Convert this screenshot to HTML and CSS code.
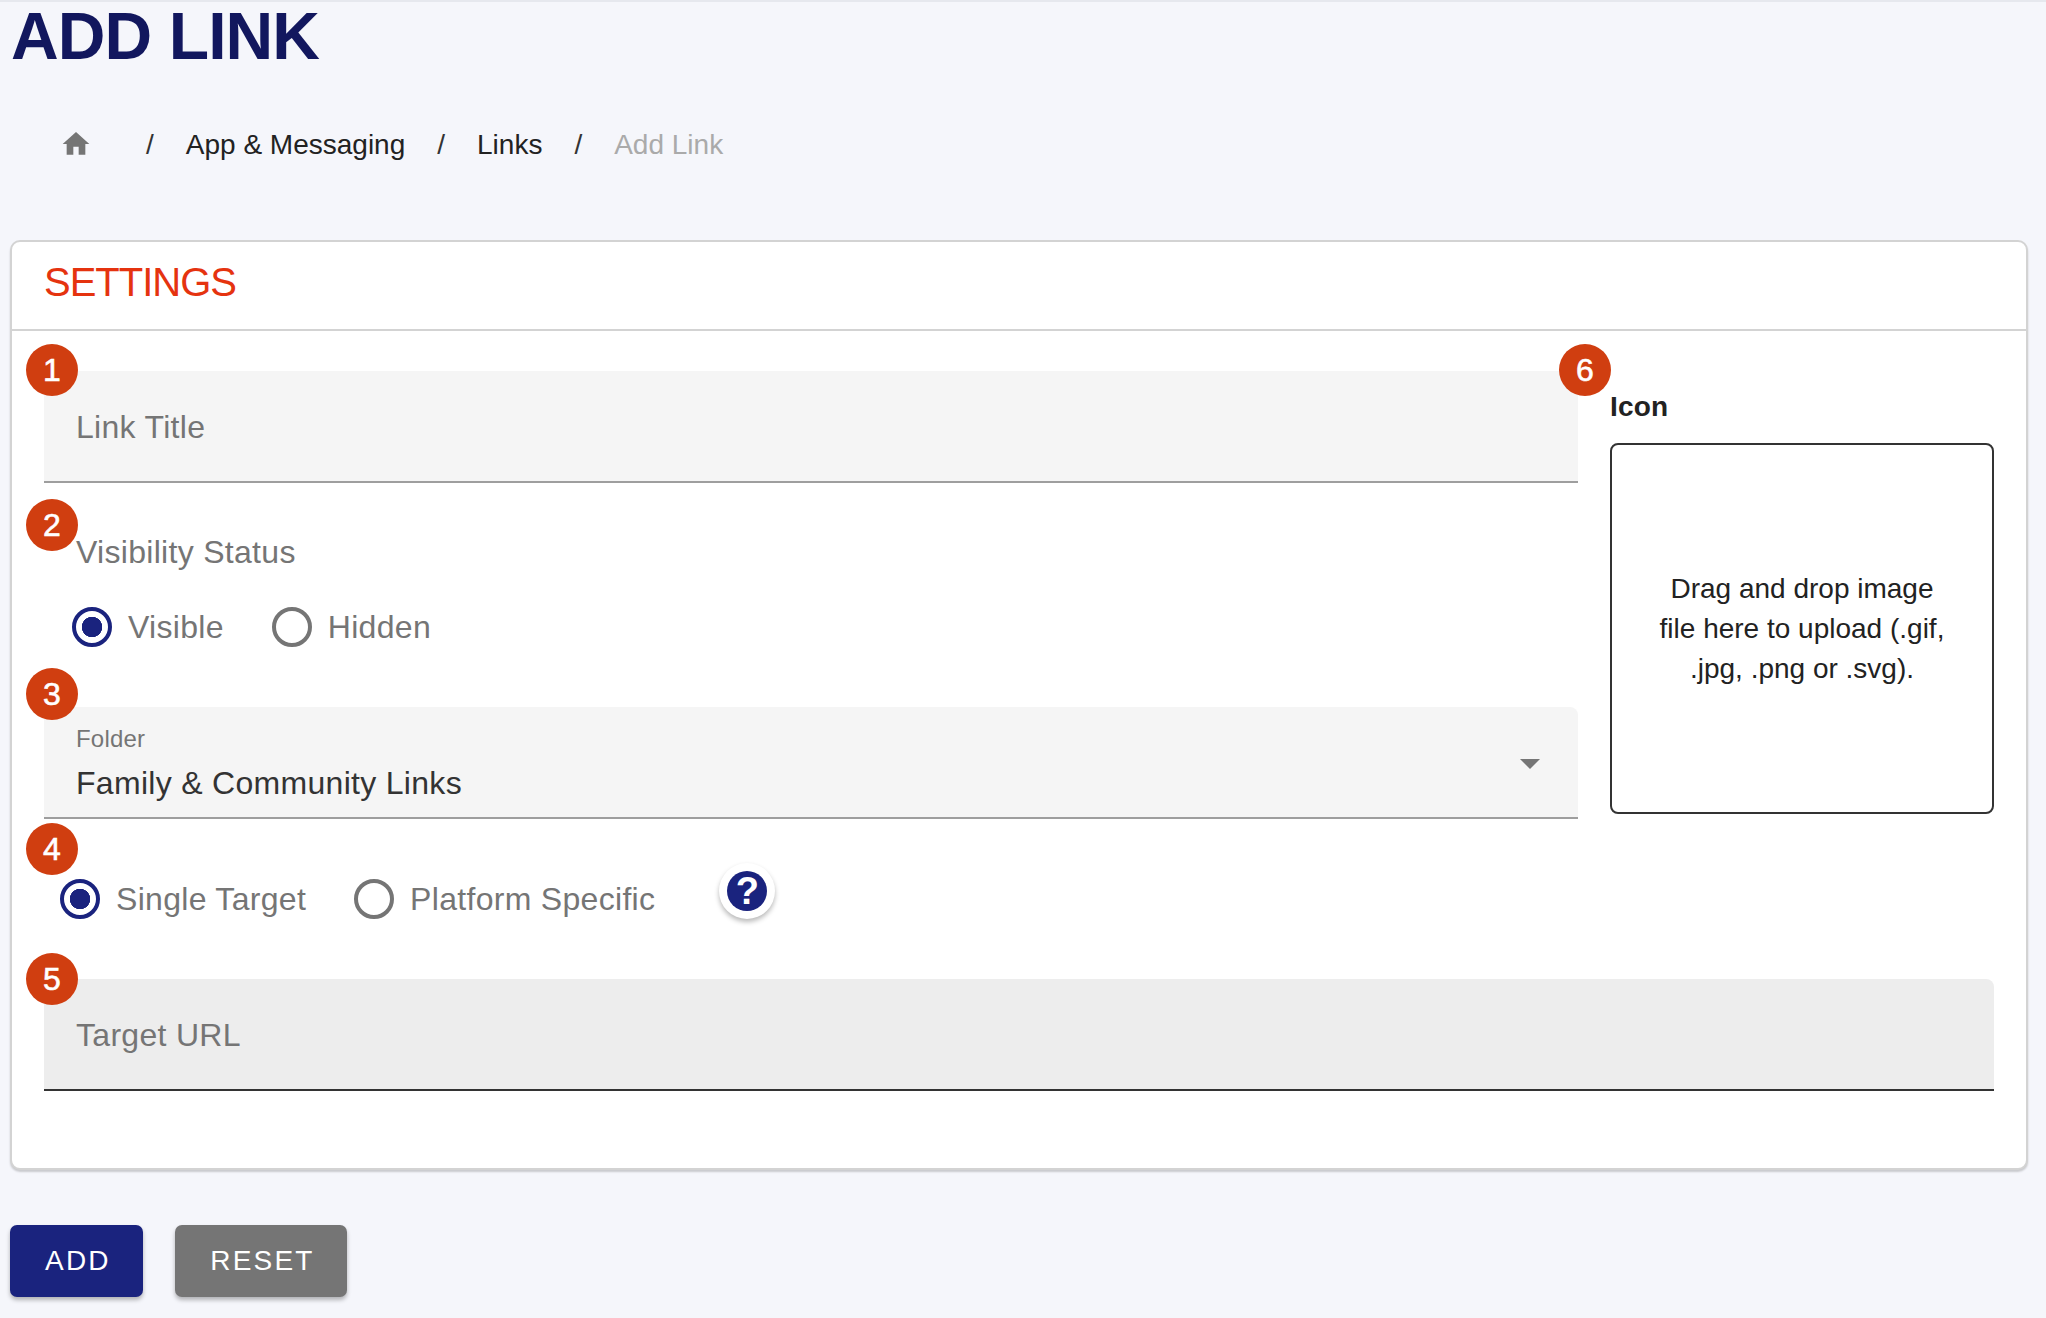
FILE: index.html
```html
<!DOCTYPE html>
<html lang="en">
<head>
<meta charset="utf-8">
<title>Add Link</title>
<link rel="stylesheet" href="styles.css">
</head>
<body>
<main class="page">
  <h1 class="title">ADD LINK</h1>
  <nav class="crumbs">
    <svg class="home" viewBox="0 0 24 24"><path d="M10 20v-6h4v6h5v-8h3L12 3 2 12h3v8z"/></svg>
    <span class="sep">/</span>
    <span>App &amp; Messaging</span>
    <span class="sep">/</span>
    <span>Links</span>
    <span class="sep">/</span>
    <span class="current">Add Link</span>
  </nav>
  <section class="card">
    <header class="card-head"><h2>SETTINGS</h2></header>
    <div class="card-body">
      <div class="top-grid">
        <div class="left-col">
          <div class="field">
            <span class="badge badge-1">1</span>
            <span class="placeholder">Link Title</span>
          </div>
          <div class="group">
            <span class="badge badge-2">2</span>
            <div class="group-label">Visibility Status</div>
            <div class="radios radios-a">
              <label class="radio"><span class="dot on"></span>Visible</label>
              <label class="radio"><span class="dot"></span>Hidden</label>
            </div>
          </div>
          <div class="field select">
            <span class="badge badge-3">3</span>
            <span class="small-label">Folder</span>
            <span class="value">Family &amp; Community Links</span>
            <span class="caret"></span>
          </div>
        </div>
        <div class="right-col">
          <span class="badge badge-6">6</span>
          <div class="icon-label">Icon</div>
          <div class="drop">Drag and drop image<br>file here to upload (.gif,<br>.jpg, .png or .svg).</div>
        </div>
      </div>
      <div class="target-row">
        <span class="badge badge-4">4</span>
        <div class="radios radios-b">
          <label class="radio"><span class="dot on"></span>Single Target</label>
          <label class="radio"><span class="dot"></span>Platform Specific</label>
        </div>
        <button class="help" type="button"><span class="help-inner">?</span></button>
      </div>
      <div class="field field-url">
        <span class="badge badge-5">5</span>
        <span class="placeholder">Target URL</span>
      </div>
    </div>
  </section>
  <div class="actions">
    <button class="btn btn-add" type="button">ADD</button>
    <button class="btn btn-reset" type="button">RESET</button>
  </div>
</main>
</body>
</html>
```
FILE: styles.css
```css
* { box-sizing: border-box; }
html, body { margin: 0; height: 100%; }
body {
  background: #f5f6fb;
  border-top: 2px solid #e6e8ee;
  font-family: "Liberation Sans", Arial, sans-serif;
  color: #222;
  overflow: hidden;
}
.page { padding: 0 18px 0 10px; }
.title {
  margin: 0 0 0 1px;
  height: 68px;
  font-size: 66px;
  line-height: 68px;
  font-weight: 700;
  letter-spacing: -0.9px;
  color: #12175e;
}
.crumbs {
  display: flex;
  align-items: center;
  gap: 32px;
  height: 56px;
  margin-top: 47px;
  padding-left: 50px;
  font-size: 28px;
  line-height: 40px;
  color: #222;
}
.home { width: 32px; height: 32px; margin: 0 22px 2px 0; fill: #757575; }
.sep { color: #333; }
.current { color: #aaa; }
.card {
  margin-top: 67px;
  background: #fff;
  border: 2px solid #d3d3d3;
  border-radius: 10px;
  box-shadow: 0 2px 2px rgba(0,0,0,.18);
}
.card-head {
  height: 89px;
  padding: 16px 0 0 32px;
  border-bottom: 2px solid #d3d3d3;
}
.card-head h2 {
  margin: 0;
  font-size: 40px;
  line-height: 48px;
  font-weight: 400;
  letter-spacing: -1px;
  color: #e5330f;
}
.card-body { padding: 40px 32px 77px; }
.top-grid { display: grid; grid-template-columns: 1534px 384px; gap: 32px; }
.left-col { display: flex; flex-direction: column; }
.right-col { position: relative; padding-top: 16px; }
.field {
  position: relative;
  height: 112px;
  padding: 36px 0 0 32px;
  background: #f5f5f5;
  border-bottom: 2px solid #9e9e9e;
  border-radius: 8px 8px 0 0;
}
.placeholder {
  display: block;
  font-size: 32px;
  line-height: 40px;
  letter-spacing: .3px;
  color: #757575;
}
.group { position: relative; margin-top: 49px; padding-left: 32px; }
.group-label { font-size: 32px; line-height: 40px; letter-spacing: .3px; color: #757575; }
.radios { display: flex; gap: 48px; }
.radios-a { margin: 35px 0 0 -4px; }
.radio {
  display: flex;
  align-items: center;
  gap: 16px;
  height: 40px;
  font-size: 32px;
  line-height: 40px;
  letter-spacing: .3px;
  color: #757575;
}
.dot {
  display: block;
  flex: none;
  width: 40px;
  height: 40px;
  border: 4px solid #757575;
  border-radius: 50%;
}
.dot.on {
  border-color: #1a237e;
  background: radial-gradient(circle, #1a237e 0 10px, transparent 10.5px);
}
.select { margin-top: 60px; padding: 16px 0 0 32px; }
.small-label { display: block; font-size: 24px; line-height: 32px; letter-spacing: .2px; color: #757575; }
.value { display: block; margin-top: 8px; font-size: 32px; line-height: 40px; letter-spacing: .3px; color: #333; }
.caret {
  position: absolute;
  right: 38px;
  top: 52px;
  border-left: 10px solid transparent;
  border-right: 10px solid transparent;
  border-top: 10px solid #757575;
}
.icon-label { font-size: 28px; line-height: 40px; font-weight: 700; letter-spacing: .2px; color: #222; }
.drop {
  display: flex;
  align-items: center;
  justify-content: center;
  height: 371px;
  margin-top: 16px;
  border: 2px solid #333;
  border-radius: 8px;
  font-size: 28px;
  line-height: 40px;
  text-align: center;
  color: #222;
}
.target-row {
  position: relative;
  display: flex;
  align-items: flex-end;
  height: 56px;
  margin-top: 44px;
  padding-left: 16px;
}
.help {
  display: flex;
  align-items: center;
  justify-content: center;
  flex: none;
  width: 56px;
  height: 56px;
  margin-left: 64px;
  padding: 0;
  border: 0;
  border-radius: 50%;
  background: #fff;
  box-shadow: 0 3px 5px rgba(0,0,0,.28);
}
.help-inner {
  display: block;
  width: 40px;
  height: 40px;
  border-radius: 50%;
  background: #1a237e;
  color: #fff;
  font: 700 38px/40px "Liberation Sans", Arial, sans-serif;
  text-align: center;
}
.field-url {
  margin-top: 60px;
  background: #ededed;
  border-bottom-color: #333;
}
.badge {
  position: absolute;
  display: block;
  width: 52px;
  height: 52px;
  border-radius: 50%;
  background: #d03e10;
  color: #fff;
  font-size: 32px;
  line-height: 52px;
  font-weight: 400;
  letter-spacing: 0;
  -webkit-text-stroke: .6px #fff;
  text-align: center;
}
.badge-1 { left: -18px; top: -27px; }
.badge-2 { left: -18px; top: -33px; }
.badge-3 { left: -18px; top: -39px; }
.badge-4 { left: -18px; top: -40px; }
.badge-5 { left: -18px; top: -26px; }
.badge-6 { left: -51px; top: -27px; }
.actions { display: flex; gap: 32px; margin-top: 55px; }
.btn {
  height: 72px;
  padding: 0 32.5px 0 35px;
  border: 0;
  border-radius: 7px;
  color: #fff;
  font: 400 28px/40px "Liberation Sans", Arial, sans-serif;
  letter-spacing: 2.2px;
  box-shadow: 0 3px 4px rgba(0,0,0,.28);
}
.btn-add { background: #1a237e; }
.btn-reset { background: #757575; }
```
